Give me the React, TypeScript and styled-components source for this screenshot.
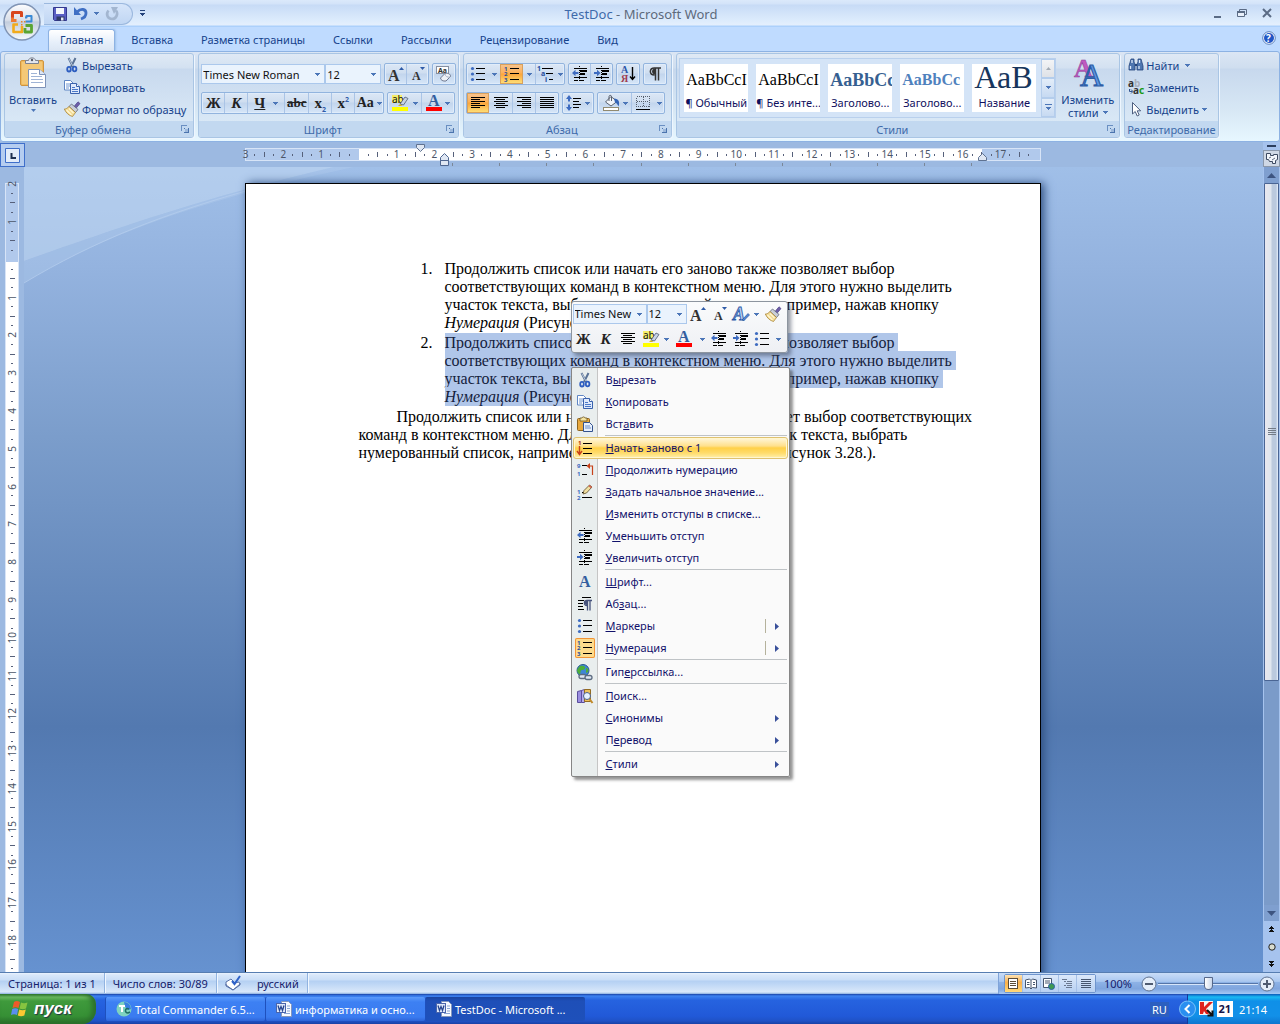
import React from "react";
import styled, { createGlobalStyle, css } from "styled-components";

const ui = `"Noto Sans", "Open Sans", sans-serif`;
const serif = `"Liberation Serif", "Times New Roman", serif`;

const Global = createGlobalStyle`
  *, *::before, *::after { box-sizing: border-box; }
  html, body { margin: 0; height: 100%; }
  body { font-family: ${ui}; font-size: 11px; color: #15428b; }
  button, select, input { font: inherit; color: inherit; margin: 0; padding: 0; border: 0; background: none; }
  svg { display: block; flex: none; overflow: visible; }
`;

/* ---------- icons ---------- */

type IcoProps = { w?: number; h?: number; crisp?: boolean; children: React.ReactNode };
const Ico = ({ w = 16, h = 16, crisp, children }: IcoProps) => (
  <svg width={w} height={h} viewBox={`0 0 ${w} ${h}`} fill="none" shapeRendering={crisp ? "crispEdges" : "auto"} aria-hidden="true">
    {children}
  </svg>
);

const Down = () => (
  <Ico w={5} h={3} crisp><path d="M0 0h5v1h-1v1h-1v1h-1v-1h-1v-1h-1z" fill="#4c76b8" /></Ico>
);

const ScissorsIcon = () => (
  <Ico>
    <path d="M4.500 1l4.600 9M11.500 1L7 10" stroke="#5a7396" strokeWidth="2" />
    <path d="M4.800 1.500l4 7.400" stroke="#dfe8f4" strokeWidth=".7" />
    <ellipse cx="5" cy="12.200" rx="1.800" ry="2.300" stroke="#2f5fc0" strokeWidth="1.800" />
    <ellipse cx="10.600" cy="12" rx="1.800" ry="2.300" stroke="#2f5fc0" strokeWidth="1.800" />
  </Ico>
);
const CopyIcon = () => (
  <Ico>
    <path d="M.5 1.500h6l2.500 2.500v7h-8.500z" fill="#fff" stroke="#5f86c4" />
    <path d="M2 5h4M2 7h4M2 9h3" stroke="#6f96d2" />
    <path d="M6.500 4.500h6l3 3v7h-9z" fill="#dfeafc" stroke="#3a62ad" />
    <path d="M12.500 4.500v3h3" fill="#fff" stroke="#3a62ad" />
    <path d="M8 8.500h3M8 10.500h6M8 12.500h6" stroke="#4a78c8" />
  </Ico>
);
const BrushIcon = () => (
  <Ico>
    <path d="M10 5.500L14 .8l2 1.800-4 4.700z" fill="#6d5ea8" stroke="#4b3f86" strokeWidth=".7" />
    <path d="M7.500 3l6.500 5.500-2.500 3-6.500-6z" fill="#c9ced8" stroke="#5d6678" strokeWidth=".8" />
    <path d="M5 5.500l6.500 6L8.500 15.500C5 14.500 2 12 .3 8c1.700.2 3.200-1 4.700-2.500z" fill="#f3dc95" stroke="#a9853a" strokeWidth=".8" />
    <path d="M2.500 9l5 5M5 7.500l4.500 4.500" stroke="#fff6d4" strokeWidth="1.200" />
  </Ico>
);
const PasteLarge = () => (
  <Ico w={28} h={32}>
    <rect x="1.500" y="3.500" width="23" height="25" rx="1.500" fill="#f0bb5d" stroke="#cf9440" />
    <path d="M3 5h20v22H3z" fill="#f4c877" />
    <path d="M6.500 6.500V3.500h3c.3-3.500 6.700-3.500 7 0h3v3z" fill="#e3e6ee" stroke="#7c8290" />
    <circle cx="13" cy="3" r="1.200" fill="#555c6b" />
    <path d="M9.500 12.500h11l6 5v13h-17z" fill="#fff" stroke="#7d92b8" />
    <path d="M20.500 12.500v5h6" fill="#dce6f5" stroke="#7d92b8" />
    <path d="M12 16.500h6M12 19.500h11M12 22.500h12M12 25.500h12" stroke="#9fb4d6" />
  </Ico>
);
const PasteSmall = () => (
  <Ico>
    <rect x=".5" y="2.500" width="12" height="12" rx="1" fill="#e9a93f" stroke="#8d6420" />
    <path d="M3 5V2h2C5.200.5 7.800.5 8 2h2v3z" fill="#f3e3a0" stroke="#6d5524" strokeWidth=".8" />
    <path d="M6.500 6.500h6l3 3v6h-9z" fill="#e8f0fc" stroke="#33528e" />
    <path d="M8 10h5M8 12h6" stroke="#6b8dcb" />
  </Ico>
);

const BulletsIcon = () => (
  <Ico>
    {[2.5, 8, 13.5].map((y) => <circle key={y} cx="2.500" cy={y} r="1.600" fill="#3d6bc0" />)}
    <path d="M6 2.500h9M6 7.500h9M6 13.500h9" stroke="#000" shapeRendering="crispEdges" />
  </Ico>
);
const NumberingIcon = () => (
  <Ico>
    <path d="M6 2.500h9M6 7.500h9M6 13.500h9" stroke="#000" shapeRendering="crispEdges" />
    <g fill="#274d9e" fontSize="6" fontWeight="700" fontFamily={ui}>
      <text x="0" y="5">1</text><text x="0" y="10">2</text><text x="0" y="16">3</text>
    </g>
  </Ico>
);
const MultilevelIcon = () => (
  <Ico w={18}>
    <path d="M5 2.500h11M9 7.500h7M12 13.500h4" stroke="#000" shapeRendering="crispEdges" />
    <g fill="#274d9e" fontSize="7" fontWeight="700" fontFamily={ui}>
      <text x="0" y="5">1</text><text x="4" y="10">a</text><text x="8" y="16">i</text>
    </g>
  </Ico>
);
const IndentIcon = ({ right }: { right?: boolean }) => (
  <Ico>
    <path d="M2 2.500h13M2 11.500h13M2 14.500h4M8 14.500h4" stroke="#000" shapeRendering="crispEdges" />
    <path d="M8 5h7M8 8h5" stroke="#000" strokeWidth="2" shapeRendering="crispEdges" />
    <path d="M7.500 0v16" stroke="#000" strokeDasharray="1 1" shapeRendering="crispEdges" />
    <path d={right ? "M6.500 7L3 3.800v2.200H0v2h3v2.200z" : "M0 7l3.500-3.200v2.200h3v2h-3v2.200z"} fill="#3d6bc0" />
  </Ico>
);
const AlignIcon = ({ kind }: { kind: "l" | "c" | "r" | "j" }) => (
  <Ico w={16} h={14} crisp>
    {[14, 9, 14, 9, 14, 9].map((w, i) => {
      const len = kind === "j" ? 14 : w;
      const x = kind === "r" ? 15 - len : kind === "c" ? 1 + Math.floor((14 - len) / 2) : 1;
      return <rect key={i} x={x} y={1 + i * 2} width={len} height="1" fill="#000" />;
    })}
  </Ico>
);
const SpacingIcon = () => (
  <Ico>
    <path d="M7 3.500h8M7 6.500h6M7 9.500h8M7 12.500h6" stroke="#000" shapeRendering="crispEdges" />
    <path d="M3 0l3 4H4v2.500H2V4H0zM3 16l3-4H4V9.500H2V12H0z" fill="#3d6bc0" />
  </Ico>
);
const SortIcon = () => (
  <Ico>
    <g fontFamily={serif} fontWeight="700" fontSize="10">
      <text x="1" y="7" fill="#2c57a8">А</text><text x="1" y="16" fill="#a03c50">Я</text>
    </g>
    <path d="M12.500 1v12M10 10.500l2.500 3 2.500-3" stroke="#000" strokeWidth="1.400" />
  </Ico>
);
const BucketIcon = () => (
  <Ico w={18}>
    <path d="M3.500 7L9 1.500l6 5-6 4.500z" fill="#f2f5fa" stroke="#59616e" />
    <path d="M7 6V1.500c0-1.500 2.500-1.500 2.500 0V6" stroke="#59616e" />
    <path d="M12 3.500c5 .5 6 3.500 4.500 8-1-2.500-2-3.500-3.500-4z" fill="#3464b6" />
    <rect x="1.500" y="12.500" width="15" height="3" fill="#fff" stroke="#918a70" />
  </Ico>
);
const BorderIcon = () => (
  <Ico>
    <path d="M1.500 1.500h13v10h-13zM8 2v10M2 6.500h12" stroke="#55606e" strokeDasharray="1 1" shapeRendering="crispEdges" />
    <path d="M1 14.500h14" stroke="#000" shapeRendering="crispEdges" />
  </Ico>
);
const HighlightIcon = () => (
  <Ico w={18}>
    <rect x="0" y="0" width="10" height="8" fill="#f5ee6a" />
    <text x="0" y="8" fontSize="10" fill="#111" fontFamily={ui}>ab</text>
    <path d="M8 9l5-7 3 1.500-4.500 6.500z" fill="#c7d3e6" stroke="#4c5a70" strokeWidth=".8" />
    <path d="M8 9l-2 2h4.500z" fill="#d3b02a" />
    <rect x="0" y="12" width="16" height="4" fill="#ffff00" />
  </Ico>
);
const FontColorIcon = () => (
  <Ico>
    <text x="2" y="11" fontSize="16" fontWeight="700" fill="#335f9f" fontFamily={serif}>A</text>
    <rect x="0" y="12" width="16" height="4" fill="#f00" />
  </Ico>
);
const SizeAIcon = ({ up }: { up?: boolean }) => (
  <Ico w={18}>
    <text x={up ? 1 : 3} y={up ? 15 : 14} fontSize={up ? 16 : 12} fontWeight="700" fill="#333" fontFamily={serif}>A</text>
    <path d={up ? "M12 4h5l-2.500-3z" : "M11 1h5l-2.500 3z"} fill="#2f5ba8" />
  </Ico>
);
const ClearIcon = () => (
  <Ico w={18}>
    <rect x="1.500" y=".5" width="12" height="7" fill="#fff" stroke="#8590a3" />
    <text x="3" y="7" fontSize="7" fontWeight="700" fill="#333" fontFamily={ui}>Аа</text>
    <path d="M5.500 12l4.500-4.500c2-1 6 .5 5.500 3l-4.500 4.500c-3 .5-5.500-1-5.500-3z" fill="#eef1f6" stroke="#6d7890" />
    <path d="M10 8c.5 2.500 2 3.500 5 3" stroke="#a9b3c6" />
  </Ico>
);
const StyleAIcon = () => (
  <Ico w={18}>
    <text x="0" y="14" fontSize="18" fontStyle="italic" fontWeight="700" fill="#b9d2f4" stroke="#2f5ba8" strokeWidth=".9" fontFamily={serif}>A</text>
    <path d="M9 14l6-6.500 1.500 1.500-5.500 5.500z" fill="#4f86d8" stroke="#254c8d" strokeWidth=".6" />
  </Ico>
);
const ChangeStylesIcon = () => (
  <Ico w={32} h={32}>
    <text x="2" y="20" fontSize="26" fontWeight="700" fill="#c05ac0" stroke="#8a3c96" strokeWidth=".5" fontFamily={serif}>A</text>
    <text x="8" y="29" fontSize="32" fill="#5f97e2" stroke="#2e5da6" strokeWidth="1.200" fontFamily={serif}>A</text>
  </Ico>
);
const FindIcon = () => (
  <Ico>
    <path d="M3 2h3v3l1 2v6H1V9zM13 2h-3v3L9 7v6h6V9z" fill="#4e76b0" stroke="#24457c" strokeWidth=".8" />
    <path d="M2.500 9v3M11 9v3M4 3v3M11.500 3v3" stroke="#dce9fb" strokeWidth="1.300" />
    <path d="M7 7h2v2H7z" fill="#24457c" />
  </Ico>
);
const ReplaceIcon = () => (
  <Ico w={17}>
    <g fontSize="10" fontWeight="700" fontFamily={ui}>
      <text x="0" y="8" fill="#333">a</text><text x="6" y="8" fill="#a9b1bd">b</text>
      <text x="5" y="15" fill="#333">a</text><text x="11" y="15" fill="#1b9a1b">c</text>
    </g>
    <path d="M1.500 10v2.500h3M3 10.500l2 2-2 2" stroke="#33558f" />
  </Ico>
);
const CursorIcon = () => (
  <Ico><path d="M4.500 1.500v11.500l2.700-2.500 2 4.500 2-1-2-4.200h3.500z" fill="#fff" stroke="#4e5f80" /></Ico>
);
const RestartIcon = () => (
  <Ico>
    <path d="M6 3.500h9M6 8.500h9M6 13.500h9" stroke="#000" shapeRendering="crispEdges" />
    <text x="1" y="5" fontSize="6" fontWeight="700" fill="#b03010" fontFamily={ui}>1</text>
    <path d="M2.500 6v7M0 11l2.500 3.500L5 11" stroke="#c8421a" strokeWidth="1.400" />
  </Ico>
);
const ContinueIcon = () => (
  <Ico>
    <g fontSize="6" fontWeight="700" fill="#3d6bc0" fontFamily={ui}><text x="0" y="6">9</text><text x="0" y="14">1</text></g>
    <path d="M5 3.500h5M5 12.500h5" stroke="#000" shapeRendering="crispEdges" />
    <path d="M15.500 13V4h-4" stroke="#c8421a" strokeWidth="1.200" /><path d="M9.500 4L13 1v6z" fill="#c8421a" />
  </Ico>
);
const SetValueIcon = () => (
  <Ico>
    <g fontSize="6" fontWeight="700" fill="#3d6bc0" fontFamily={ui}><text x="0" y="10">1</text><text x="0" y="16">2</text></g>
    <path d="M5 8.500h2M5 13.500h10" stroke="#000" shapeRendering="crispEdges" />
    <path d="M6 10l1-3.500L12.500 1l2.500 2-5.500 6z" fill="#f0dfa0" stroke="#5b4a25" strokeWidth=".8" />
    <path d="M12.500 1l2.500 2-1 1.200-2.500-2z" fill="#d7604e" />
  </Ico>
);
const FontAIcon = () => (
  <Ico><text x="2" y="13" fontSize="16" fontWeight="700" fill="#335f9f" fontFamily={serif}>A</text></Ico>
);
const ParagraphIcon = () => (
  <Ico>
    <path d="M5 1.500h9M1 4.500h6M1 7.500h5M1 10.500h5M1 13.500h6" stroke="#000" shapeRendering="crispEdges" />
    <path d="M10 9.500c-3.500 0-3.500-5 0-5h5M10.500 5v9.500M13 5v9.500" stroke="#46527c" strokeWidth="1.300" />
    <path d="M10 5H9C7 5 7 9 10 9z" fill="#46527c" />
  </Ico>
);
const LinkIcon = () => (
  <Ico w={17}>
    <circle cx="7" cy="6.500" r="6" fill="#3f86d6" stroke="#27588f" />
    <path d="M3 3c2-2 5-1 6 0s-1 3-3 3-1 3-2 4-3-2-3-4zM10 4c2 0 3 2 2 4l-2 1z" fill="#4caf3a" />
    <rect x="3" y="10.500" width="7" height="4" rx="2" stroke="#5d6c80" strokeWidth="1.300" fill="#dfe7f2" />
    <rect x="9" y="11.500" width="7" height="4" rx="2" stroke="#5d6c80" strokeWidth="1.300" fill="#dfe7f2" />
  </Ico>
);
const ResearchIcon = () => (
  <Ico>
    <path d="M.5 3.500l4-1v12h-4z" fill="#9a8ee0" stroke="#5a4e9e" />
    <path d="M4.500 2.500l3-1v13h-3z" fill="#b4aaec" stroke="#5a4e9e" />
    <path d="M7.500 1.500h6v12h-6z" fill="#eec25c" stroke="#946c22" />
    <circle cx="10" cy="8" r="3.500" fill="#e6f2ff" stroke="#4b6087" />
    <path d="M12.500 11l3 4" stroke="#c18a2a" strokeWidth="2" />
  </Ico>
);
const SaveIcon = () => (
  <Ico>
    <path d="M1.500 1.500h13v13h-12l-1-1z" fill="#5a5fc4" stroke="#34398f" />
    <path d="M4 2h8v6H4z" fill="#f4f7fc" /><path d="M4.500 10.500h8v4h-8z" fill="#2f3a66" /><path d="M9 11.500h2.500v3H9z" fill="#e6ebf5" />
  </Ico>
);
const UndoIcon = ({ redo }: { redo?: boolean }) =>
  redo ? (
    <Ico><path d="M12 4.500c2.500 3 .5 8.500-4 8.500S1.500 8 4.500 4.500" stroke="#a3b6d0" strokeWidth="2.600" /><path d="M7 1h7l-4 7z" fill="#a3b6d0" /></Ico>
  ) : (
    <Ico><path d="M4 6c4-4 9-3 9 1 0 3-2 5-5 6" stroke="#3f6fc4" strokeWidth="2.800" /><path d="M1 1v8h7z" fill="#3f6fc4" /></Ico>
  );
const OfficeLogo = () => (
  <Ico w={38} h={38}>
    <defs>
      <linearGradient id="orb" x1="0" y1="0" x2="0" y2="1">
        <stop offset="0" stopColor="#fdfdfe" /><stop offset=".45" stopColor="#d9dfe9" />
        <stop offset=".5" stopColor="#c3cddd" /><stop offset="1" stopColor="#f7fafd" />
      </linearGradient>
    </defs>
    <circle cx="19" cy="19" r="18" fill="url(#orb)" stroke="#8094b4" strokeWidth="1.500" />
    <path d="M13 17.500H9.500v-8h9V14" stroke="#d8461c" strokeWidth="3" strokeLinejoin="round" />
    <path d="M9.500 14.500v3h4" stroke="#ee7a34" strokeWidth="3" />
    <path d="M22 14.500h1.500v-1.500h5v5.500h-6" stroke="#3a8ad6" strokeWidth="2" strokeLinejoin="round" />
    <path d="M15 21.500h-4.500v7.500H19v-6" stroke="#f2ab1c" strokeWidth="2.600" strokeLinejoin="round" />
    <path d="M22.500 22.500h6v6.500h-6.500v-4" stroke="#5aa532" strokeWidth="2.800" strokeLinejoin="round" />
    <path d="M18 18h1.500v1.500H18zM18 21h1.500v1.500H18zM21 18h1.500v1.500H21z" fill="#e8852a" />
  </Ico>
);
const Pilcrow = () => <Ico><path d="M7.500 9C2 9 2 2 7.500 2H14M8.500 2v12.500M11.500 2v12.500" stroke="#333" strokeWidth="1.500" /><path d="M8 2.500C4 2.500 4 8.500 8 8.500z" fill="#333" /></Ico>;
const Launcher = () => (
  <Ico w={8} h={8} crisp><path d="M.5 5.500v-5h5" stroke="#6a8fc2" /><path d="M3 3l2 2M7.500 3v4.500H3" stroke="#4b74ae" /><path d="M4 4h3v3H4z" fill="#9cb8dc" /></Ico>
);
const WordDoc = () => (
  <Ico>
    <path d="M5.500.5h7l3 3v12h-10z" fill="#f7faff" stroke="#8396bd" />
    <path d="M11 5h3M11 7.500h3M11 10h3M8 12.500h6" stroke="#8aa5d4" />
    <rect x=".500" y="2.500" width="9" height="9" fill="#dfe8f9" stroke="#4a65ac" />
    <path d="M2 4.500l1.500 5L5 5.500l1.500 4 1.500-5" stroke="#26458f" strokeWidth="1.300" />
  </Ico>
);
const Flag = () => (
  <Ico w={20} h={18}>
    <path d="M4 2c2-1.500 4-1 6 0L8.500 8c-2-1-4-1-6 0z" fill="#ee5a2a" /><path d="M11 2.500c2 1 4 1 6.500 0L16 8.500c-2 1-4.500 1-6.500 0z" fill="#86c440" />
    <path d="M2.200 9c2-1 4-1 6 0L7 15c-2-1-4-1-6 0z" fill="#5a8ef0" /><path d="M9.300 9.500c2 1 4.500 1 6.500 0l-1.500 6c-2 1-4.500 1-6.500 0z" fill="#fbc832" />
  </Ico>
);

/* ---------- frame ---------- */

const Screen = styled.div`display: flex; flex-direction: column; height: 100vh; overflow: hidden; background: #bfdbff;`;
const AppHead = styled.header`position: relative; flex: none; background: #bfdbff;`;
const TitleBar = styled.div`
  display: grid; grid-template-columns: 1fr auto 1fr; align-items: center; height: 27px; padding-left: 44px;
  background: linear-gradient(#dbe9fb 0, #d3e3f9 4px, #c7dbf6 5px, #dcebfc 20px, #e4effd 25px, #acd0fb 26px, #acd0fb 27px);
`;
const Orb = styled.button`position: absolute; left: 3px; top: 3px; z-index: 2; border-radius: 50%;`;
const QuickBar = styled.div`
  display: flex; align-items: center; gap: 3px; justify-self: start; height: 22px;
`;
const QuickPill = styled.div`
  display: flex; align-items: center; gap: 5px; height: 22px; padding: 0 12px 0 8px;
  border: 1px solid #9bb8de; border-left: 0; border-radius: 0 12px 12px 0;
  background: linear-gradient(#d6e5fa, #c0d6f3);
`;
const PlainButton = styled.button`display: flex; align-items: center; justify-content: center; min-width: 12px; min-height: 12px;`;
const Title = styled.h1`margin: 0 42px 0 0; font-size: 13px; line-height: 18px; font-weight: 400; color: #3e6aaa; span { color: #5d6a7c; }`;
const WinButtons = styled.div`display: flex; gap: 13px; justify-self: end; padding-right: 7px;`;
const TabRow = styled.nav`display: flex; gap: 4px; height: 24px; padding: 2px 4px 0 48px; align-items: stretch;`;
const Tab = styled.button<{ $on?: boolean }>`
  padding: 0 11px 2px; border: 1px solid transparent; border-bottom: 0; border-radius: 3px 3px 0 0;
  ${(p) => p.$on && css`
    border-color: #8db2e3; background: linear-gradient(#fff, #e6effa 60%, #dbe6f4); box-shadow: 1px 0 2px #9fc2ea;
  `}
`;
const HelpButton = styled.button`margin-left: auto; padding-bottom: 4px; display: flex; align-items: center;`;

const Ribbon = styled.div`
  display: flex; gap: 4px; padding: 1px 3px 3px; height: 91px;
  border: 1px solid #8db2e3; border-radius: 3px;
  background: linear-gradient(#dbe6f4 0, #cfdeef 16px, #c7d8ed 17px, #d8e8f5 60px, #e7f7ff);
  box-shadow: 0 1px 0 #8ba6c9;
`;
const GroupBox = styled.section`
  display: flex; flex-direction: column; flex: none; border: 1px solid #a9c5e4; border-radius: 3px; overflow: hidden;
  background: linear-gradient(#dfe9f5 0, #d3e1f1 14px, #c8d9ee 15px, #d9e8f6 68px);
  box-shadow: 1px 1px 0 #eef6ff;
`;
const GroupBody = styled.div<{ $pad?: string }>`display: flex; flex: 1; min-height: 0; padding: ${(p) => p.$pad || "0"};`;
const GroupLabel = styled.div`
  display: flex; align-items: center; height: 16px; padding: 0 2px; background: #c2d8f0; color: #3e6aaa;
  span { flex: 1; text-align: center; }
`;
const Group = ({ name, launcher = true, pad, children }: { name: string; launcher?: boolean; pad?: string; children: React.ReactNode }) => (
  <GroupBox aria-label={name}>
    <GroupBody $pad={pad}>{children}</GroupBody>
    <GroupLabel><span>{name}</span>{launcher && <PlainButton aria-label={`${name}: параметры`}><Launcher /></PlainButton>}</GroupLabel>
  </GroupBox>
);
const BigButton = styled.button<{ $w: number }>`
  display: flex; flex-direction: column; align-items: center; width: ${(p) => p.$w}px; padding-top: 3px; line-height: 13px;
  svg + span { margin-top: 4px; }
`;
const Inline = styled.span`display: flex; align-items: center; gap: 4px;`;
const Stack = styled.div`display: flex; flex-direction: column;`;
const SmallButton = styled.button<{ $gap?: number }>`
  display: flex; align-items: center; height: 22px; padding: 0 3px; white-space: nowrap;
  > svg:first-child { margin-right: 2px; }
  > svg:last-child { margin-left: ${(p) => p.$gap || 0}px; }
`;
const ToolRows = styled.div`display: flex; flex-direction: column; gap: 7px;`;
const ToolRow = styled.div`display: flex; height: 22px; gap: 3px;`;
const ComboPair = styled.div`display: flex; align-items: center;`;
const ToolSet = styled.div`
  display: flex; border: 1px solid #92b4de; border-radius: 2px; box-shadow: inset 0 0 0 1px #e0ecfa;
  background: linear-gradient(#dce7f5 0, #cfdef0 9px, #c2d5ed 10px, #d6e6f8);
`;
const Tool = styled.button<{ $w?: number; $gap?: number; $on?: boolean; $line?: boolean }>`
  display: flex; align-items: center; justify-content: center; gap: ${(p) => p.$gap || 3}px; width: ${(p) => p.$w || 22}px; height: 20px;
  border-left: ${(p) => (p.$line ? "1px solid #aac4e6" : "0")}; color: #222;
  ${(p) => p.$on && css`background: linear-gradient(#f7c592, #fdb158 45%, #fba53a 50%, #fee37c); box-shadow: inset 0 0 0 1px #d9a15c;`}
`;
const Glyph = styled.span<{ $i?: boolean; $u?: boolean; $s?: boolean; $size?: number }>`
  font-family: ${serif}; font-weight: 700; font-size: ${(p) => p.$size || 15}px; line-height: 18px;
  font-style: ${(p) => (p.$i ? "italic" : "normal")};
  text-decoration: ${(p) => (p.$u ? "underline" : p.$s ? "line-through" : "none")};
  sub, sup { font-family: ${ui}; font-size: 7px; line-height: 1px; color: #2f5ba8; }
`;
const ComboBox = styled.label<{ $w: number }>`
  display: flex; align-items: center; width: ${(p) => p.$w}px; height: 20px; padding-right: 4px;
  border: 1px solid #abc8ec; background: #eaf3fd; color: #000;
  select { appearance: none; flex: 1; min-width: 0; height: 18px; padding-left: 1px; color: #111; }
`;
const Combo = ({ w, label, value }: { w: number; label: string; value: string }) => (
  <ComboBox $w={w}><select aria-label={label} defaultValue={value}><option>{value}</option></select><Down /></ComboBox>
);

const Gallery = styled.div`display: flex; border: 1px solid #b9d0ed; background: #d4e4f7; margin: 4px 0 4px 2px; height: 60px;`;
const Cards = styled.div`display: flex; gap: 8px; padding: 5px 5px 5px 4px;`;
const Card = styled.button<{ $c: string; $size: number; $b?: boolean }>`
  display: flex; flex-direction: column; width: 64px; height: 48px; overflow: hidden; background: #fff; color: #10105e;
  strong {
    height: 30px; width: 64px; overflow: hidden; padding-left: 2px; text-align: left; white-space: nowrap;
    font-family: ${serif}; font-size: ${(p) => p.$size}px; line-height: ${(p) => (p.$size > 20 ? 26 : 32)}px;
    font-weight: ${(p) => (p.$b ? 700 : 400)}; color: ${(p) => p.$c};
  }
  span { width: 64px; text-align: center; white-space: nowrap; line-height: 18px; }
`;
const GalleryNav = styled.div`
  display: flex; flex-direction: column; width: 14px;
  button { flex: 1; display: flex; align-items: center; justify-content: center; border: 1px solid #b4cdec; background: linear-gradient(#e3edf9, #c7daf2); }
  button:first-child { background: linear-gradient(#f3f4f6, #dfe2e7); }
`;

/* ---------- workspace ---------- */

const Work = styled.div`
  flex: 1; min-height: 0; display: grid; grid-template: 25px minmax(0, 1fr) / 24px minmax(0, 1fr) 17px; background: #9cb9e1;
`;
const TabStop = styled.button`
  width: 25px; height: 24px; margin-top: 1px; border: 1px solid #3f6fca; background: #b5cdf0; display: flex; align-items: center; justify-content: center;
`;
const RulerRow = styled.div`display: flex; justify-content: center; padding: 6px 2px 0 0;`;
const RulerWrap = styled.div`position: relative; width: 796px;`;
const HRuler = styled.div`
  display: flex; justify-content: space-between; height: 13px; border: 1px solid #d7e4f7; color: #4c5668;
  background: linear-gradient(90deg, #b1c9ec 113px, #fff 113px, #fff 736px, #b1c9ec 736px);
`;
const Mark = styled.span`
  width: 0; display: flex; align-items: center; justify-content: center; font-size: 10px; line-height: 11px;
`;
const Dot = styled.i<{ $long?: boolean; $v?: boolean }>`
  flex: none; background: #56607a;
  width: ${(p) => (p.$v ? (p.$long ? 5 : 2) : 1)}px; height: ${(p) => (p.$v ? 1 : p.$long ? 5 : 2)}px;
`;
const Stops = styled.div`
  display: flex; justify-content: space-between; padding: 2px 68px 0 207px;
  i { width: 1px; height: 3px; background: #7b8797; }
`;
const Marker = styled.span<{ $x: number; $y: number }>`position: absolute; left: ${(p) => p.$x}px; top: ${(p) => p.$y}px;`;
const VSide = styled.div`overflow: hidden; padding: 16px 5px 0;`;
const VRuler = styled.div`
  display: flex; flex-direction: column; justify-content: space-between; width: 14px; height: 1137px; border: 1px solid #d7e4f7;
  background: linear-gradient(#b1c9ec 78px, #fff 78px); color: #4c5668;
`;
const VMark = styled.span`
  height: 0; width: 12px; display: flex; align-items: center; justify-content: center; font-size: 10px;
  b { font-weight: 400; writing-mode: vertical-rl; transform: rotate(180deg); line-height: 12px; }
`;
const Canvas = styled.main`
  position: relative; display: flex; justify-content: center; padding: 16px 2px 0 0; overflow: hidden;
  background: linear-gradient(#a0bfe8 0, #94b3df 100px, #7b9dcb 270px, #5379b0 560px, #6692d0 100%);
`;
const Swoosh = styled.div`position: absolute; left: 0; top: 0;`;
const Paper = styled.article`
  position: relative; flex: none; width: 796px; height: 1123px; padding: 76px 58px 0 113px;
  border: 1px solid #000; background: #fff; box-shadow: 3px 0 9px #2f4f80;
  font-family: ${serif}; font-size: 16px; line-height: 18px; color: #000;
  p { margin: 0; text-indent: 38px; }
`;
const DocList = styled.ol`
  margin: 0; padding-left: 86px; li { margin-bottom: 2px; list-style: none; }
`;
const Num = styled.span`float: left; width: 24px; margin-left: -24px;`;
const Picked = styled.mark`background: #b0c6e9; color: #14213c; padding: 1px 4px 1px 0; box-decoration-break: clone; -webkit-box-decoration-break: clone;`;

const VScroll = styled.div`grid-column: 3; grid-row: 1 / 3; display: flex; flex-direction: column; align-items: center; background: #a6c3ee;`;
const SplitBar = styled.div`width: 9px; height: 2px; margin: 3px 0; background: #2c3f5f;`;
const RulerToggle = styled.button`width: 17px; height: 17px; display: flex; align-items: center; justify-content: center; border: 1px solid #8b98ab; background: #cfd8e5;`;
const ArrowButton = styled.button`display: flex; align-items: center; justify-content: center; width: 15px; height: 16px; background: #7f9fcf;`;
const Track = styled.div`flex: 1; width: 15px; background: #7b9bc9;`;
const Thumb = styled.div`
  height: 69%; display: flex; align-items: center; justify-content: center; border: 1px solid #4a6594; border-radius: 1px;
  background: linear-gradient(90deg, #e9e7ee, #dfe6ef 45%, #bccadd 55%, #b9c9df 85%, #e8f0fa);
`;
const NavButton = styled.button`width: 15px; height: 17px; display: flex; align-items: center; justify-content: center;`;

/* ---------- floating menus ---------- */

const MiniBar = styled.div`
  position: absolute; left: 325px; top: 117px; width: 217px; height: 52px; padding: 1px;
  display: flex; flex-direction: column; gap: 3px; font-family: ${ui}; font-size: 11px;
  border: 1px solid #8d959f; border-radius: 3px; background: linear-gradient(#fafbfc, #eef0f4); box-shadow: 3px 3px 4px rgba(60, 70, 90, .55);
`;
const MiniRow = styled.div`display: flex; align-items: center; height: 22px;`;
const Menu = styled.div`
  position: absolute; left: 325px; top: 183px; width: 219px; padding: 1px; font-family: ${ui}; font-size: 11px; line-height: 16px;
  border: 1px solid #868686; border-radius: 2px; box-shadow: 3px 3px 3px rgba(60, 60, 60, .55);
  background: linear-gradient(90deg, #e9eeee 25px, #c5c5c5 25px, #c5c5c5 26px, #fafafa 26px);
`;
const MenuRow = styled.button<{ $hot?: boolean }>`
  display: flex; align-items: center; width: 100%; height: 22px; text-align: left; white-space: nowrap; color: #11116b;
  border: 1px solid transparent; border-radius: 3px;
  ${(p) => p.$hot && css`
    border-color: #dfc270; box-shadow: inset 0 0 0 1px #fff6d0;
    background: linear-gradient(#fff7db, #ffe08c 40%, #ffd048 50%, #ffdc6c 75%, #fff0ae);
  `}
`;
const Slot = styled.span<{ $on?: boolean }>`
  flex: none; display: flex; align-items: center; justify-content: center; width: 20px; height: 20px; margin-left: 1px; border-radius: 2px;
  ${(p) => p.$on && css`background: #fddb8b; box-shadow: inset 0 0 0 1px #f29436;`}
`;
const MenuText = styled.span`flex: 1; padding-left: 11px;`;
const Divider = styled.hr`margin: 0 1px 0 32px; height: 2px; border: 0; border-top: 1px solid #bfc3c6;`;
const SubMark = styled.span<{ $split?: boolean }>`
  display: flex; align-items: center; height: 14px; padding: 0 8px 0 9px; border-left: 1px solid ${(p) => (p.$split ? "#b5b29c" : "transparent")};
`;
const Right = () => <Ico w={4} h={7}><path d="M0 0l4 3.500L0 7z" fill="#39509a" /></Ico>;

/* ---------- bottom bars ---------- */

const StatusBar = styled.footer`
  flex: none; display: flex; align-items: flex-start; height: 22px; border-top: 1px solid #567db1; color: #15216b;
  background: linear-gradient(#eaf3fe 0, #d8e7fa 2px, #cadef7 7px, #b4d0f3 8px, #d9e8fa 19px, #8aaede 21px);
`;
const StatusItem = styled.div`
  display: flex; align-items: center; gap: 15px; height: 20px; padding: 0 8px; border-right: 1px solid #91b3e0; box-shadow: 1px 0 0 #f0f7ff;
`;
const ZoomArea = styled.div`
  display: flex; align-items: center; margin-left: auto; height: 21px; padding: 0 5px; gap: 1px; border-left: 1px solid #7fa3d8;
  background: linear-gradient(#c9ddf8, #a9c7f0 40%, #8db2e6 45%, #7fa5de 75%, #a6c8f5);
`;
const Views = styled.div`display: flex; border: 1px solid #6f95cd; border-radius: 2px; margin-right: 7px;`;
const View = styled.button<{ $on?: boolean }>`
  width: 18px; height: 17px; display: flex; align-items: center; justify-content: center; border-right: 1px solid #a5c0e6;
  background: ${(p) => (p.$on ? "linear-gradient(#fde3b5, #fbb04a 45%, #ffd97a)" : "linear-gradient(#dbe8fa, #b7d0f2)")};
  &:last-child { border-right: 0; }
`;
const Percent = styled.span`margin-right: 8px;`;
const Slider = styled.input`
  appearance: none; width: 100px; height: 16px; background: linear-gradient(transparent 7px, #5575a8 7px, #5575a8 8px, #d7e6fb 8px, #d7e6fb 9px, transparent 9px);
  &::-webkit-slider-thumb {
    appearance: none; width: 9px; height: 13px; background: linear-gradient(90deg, #fff, #c9d6ea); border: 1px solid #56688a; border-radius: 1px 1px 5px 5px;
  }
`;
const Round = styled.button`display: flex; border-radius: 50%;`;

const TaskBar = styled.div`
  flex: none; display: flex; align-items: stretch; height: 30px; color: #fff;
  background: linear-gradient(#1941a5 0, #3c81f0 2px, #2663e0 6px, #2159d8 22px, #1f52c6 27px, #1941a5);
`;
const Start = styled.button`
  display: flex; align-items: center; gap: 4px; width: 96px; padding-left: 10px; margin-right: 9px; border-radius: 0 10px 14px 0;
  font-family: "Liberation Sans", Arial, sans-serif; font-size: 17px; font-weight: 700; font-style: italic; color: #fff; text-shadow: 1px 1px 1px #234;
  background: linear-gradient(#2f7a2f 0, #6ebc62 3px, #3f9a3c 7px, #369035 22px, #2a702b 29px); box-shadow: inset -4px 0 5px #2c702c;
`;
const Task = styled.button<{ $on?: boolean }>`
  display: flex; align-items: center; gap: 3px; flex: 0 1 160px; margin: 3px 0 3px; padding-left: 10px; border-radius: 2px; border-left: 1px solid #1e50bd; white-space: nowrap;
  background: ${(p) => (p.$on ? "linear-gradient(#1a44a0, #1e4fb8 4px, #1e50ba)" : "linear-gradient(#5b9bfb, #3d80f3 5px, #3a7bf0 20px, #2d65d8)")};
`;
const Lang = styled.span`margin-left: auto; align-self: center; padding: 0 2px; background: #2c5fc0; margin-right: 18px;`;
const Tray = styled.div`
  display: flex; align-items: center; gap: 3px; padding-right: 13px; border-left: 1px solid #16399b;
  background: linear-gradient(#0c59b9 0, #19b9f3 3px, #0f90e8 7px, #1290e8 22px, #0d76cf);
  time { padding-left: 3px; }
`;
const Chevron = styled.button`margin-left: -9px; display: flex;`;
const DayBox = styled.span`width: 16px; height: 16px; background: #fff; color: #16164a; font-weight: 700; line-height: 16px; text-align: center;`;

/* ---------- content ---------- */

const tabs = ["Главная", "Вставка", "Разметка страницы", "Ссылки", "Рассылки", "Рецензирование", "Вид"];
const styleCards = [
  { sample: "AaBbCcI", name: "¶ Обычный", c: "#000", size: 16 },
  { sample: "AaBbCcI", name: "¶ Без инте...", c: "#000", size: 16 },
  { sample: "AaBbCc", name: "Заголово...", c: "#365f91", size: 18, b: true },
  { sample: "AaBbCc", name: "Заголово...", c: "#4f81bd", size: 16, b: true },
  { sample: "АаВ", name: "Название", c: "#17365d", size: 32 },
];

type Item = { t: string; icon?: React.ReactNode; hot?: boolean; on?: boolean; sub?: boolean; split?: boolean };
const menu: (Item | null)[] = [
  { t: "В&ырезать", icon: <ScissorsIcon /> },
  { t: "&Копировать", icon: <CopyIcon /> },
  { t: "Вст&авить", icon: <PasteSmall /> },
  null,
  { t: "&Начать заново с 1", icon: <RestartIcon />, hot: true },
  { t: "&Продолжить нумерацию", icon: <ContinueIcon /> },
  { t: "&Задать начальное значение...", icon: <SetValueIcon /> },
  { t: "&Изменить отступы в списке..." },
  { t: "У&меньшить отступ", icon: <IndentIcon /> },
  { t: "&Увеличить отступ", icon: <IndentIcon right /> },
  null,
  { t: "&Шрифт...", icon: <FontAIcon /> },
  { t: "Аб&зац...", icon: <ParagraphIcon /> },
  { t: "&Маркеры", icon: <BulletsIcon />, sub: true, split: true },
  { t: "&Нумерация", icon: <NumberingIcon />, on: true, sub: true, split: true },
  null,
  { t: "Гип&ерссылка...", icon: <LinkIcon /> },
  null,
  { t: "&Поиск...", icon: <ResearchIcon /> },
  { t: "&Синонимы", sub: true },
  { t: "П&еревод", sub: true },
  null,
  { t: "&Стили", sub: true },
];

const Mnemonic = ({ text }: { text: string }) => {
  const i = text.indexOf("&");
  return <MenuText>{text.slice(0, i)}<u>{text[i + 1]}</u>{text.slice(i + 2)}</MenuText>;
};

const body = "Продолжить список или начать его заново также позволяет выбор соответствующих команд в контекстном меню. Для этого нужно выделить участок текста, выбрать нумерованный список, например, нажав кнопку ";
const Sentence = () => <>{body}<em>Нумерация</em> (Рисунок 3.28.).</>;

const hMarks = Array.from({ length: 85 }, (_, k) => k);
const vMarks = Array.from({ length: 121 }, (_, k) => k);

export default function App() {
  return (
    <Screen>
      <Global />
      <AppHead>
        <Orb aria-label="Office"><OfficeLogo /></Orb>
        <TitleBar>
          <QuickBar>
            <QuickPill>
              <PlainButton aria-label="Сохранить"><SaveIcon /></PlainButton>
              <PlainButton aria-label="Отменить"><UndoIcon /></PlainButton>
              <Down />
              <PlainButton aria-label="Вернуть"><UndoIcon redo /></PlainButton>
            </QuickPill>
            <PlainButton aria-label="Настройка панели"><Ico w={7} h={7} crisp><path d="M1 0h5v1H1zM1 3h5v1H5v1H4v1H3V5H2V4H1z" fill="#24427a" /></Ico></PlainButton>
          </QuickBar>
          <Title>TestDoc <span>- Microsoft Word</span></Title>
          <WinButtons>
            <PlainButton aria-label="Свернуть"><Ico w={12} h={12} crisp><path d="M3 8h7v2H3z" fill="#5a6b85" /></Ico></PlainButton>
            <PlainButton aria-label="Восстановить"><Ico w={12} h={12}><path d="M3.500 3V1.500h7v5H9" stroke="#5a6b85" /><path d="M1.500 3.500h7v5h-7z" stroke="#5a6b85" fill="#e8f0fb" /><path d="M1 3h8v2H1z" fill="#5a6b85" /></Ico></PlainButton>
            <PlainButton aria-label="Закрыть"><Ico w={12} h={12}><path d="M2 1l8 8M10 1l-8 8" stroke="#5a6b85" strokeWidth="2" /></Ico></PlainButton>
          </WinButtons>
        </TitleBar>
        <TabRow>
          {tabs.map((t, i) => <Tab key={t} $on={i === 0}>{t}</Tab>)}
          <HelpButton aria-label="Справка">
            <Ico w={14} h={14}><circle cx="7" cy="7" r="6.300" fill="#fff" stroke="#5a80bb" /><circle cx="7" cy="7" r="5" fill="#2356c5" /><text x="4" y="11" fontSize="10" fontWeight="700" fill="#fff" fontFamily={ui}>?</text></Ico>
          </HelpButton>
        </TabRow>
      </AppHead>

      <Ribbon>
        <Group name="Буфер обмена" pad="0 4px 0 0">
          <BigButton $w={56}><PasteLarge /><span>Вставить</span><Ico w={5} h={8}><path d="M0 3h5L2.500 6z" fill="#4c76b8" /></Ico></BigButton>
          <Stack>
            <SmallButton><ScissorsIcon />Вырезать</SmallButton>
            <SmallButton><CopyIcon />Копировать</SmallButton>
            <SmallButton><BrushIcon />Формат по образцу</SmallButton>
          </Stack>
        </Group>

        <Group name="Шрифт" pad="9px 2px 0">
          <ToolRows>
            <ToolRow>
              <ComboPair>
                <Combo w={124} label="Шрифт" value="Times New Roman" />
                <Combo w={56} label="Размер" value="12" />
              </ComboPair>
              <ToolSet><Tool $w={21} aria-label="Увеличить размер"><SizeAIcon up /></Tool><Tool $line aria-label="Уменьшить размер"><SizeAIcon /></Tool></ToolSet>
              <ToolSet><Tool aria-label="Очистить формат"><ClearIcon /></Tool></ToolSet>
            </ToolRow>
            <ToolRow>
              <ToolSet>
                <Tool><Glyph>Ж</Glyph></Tool>
                <Tool $line $w={23}><Glyph $i>К</Glyph></Tool>
                <Tool $line $w={37} $gap={8}><Glyph $u>Ч</Glyph><Down /></Tool>
                <Tool $line $w={24}><Glyph $s $size={13}>abc</Glyph></Tool>
                <Tool $line $w={23}><Glyph>x<sub>2</sub></Glyph></Tool>
                <Tool $line $w={23}><Glyph>x<sup>2</sup></Glyph></Tool>
                <Tool $line $w={29}><Glyph $size={14}>Aa</Glyph><Down /></Tool>
              </ToolSet>
              <ToolSet>
                <Tool $w={33} aria-label="Цвет выделения"><HighlightIcon /><Down /></Tool>
                <Tool $line $w={33} aria-label="Цвет текста"><FontColorIcon /><Down /></Tool>
              </ToolSet>
            </ToolRow>
          </ToolRows>
        </Group>

        <Group name="Абзац" pad="9px 4px 0 2px">
          <ToolRows>
            <ToolRow>
              <ToolSet>
                <Tool $w={33} $gap={6} aria-label="Маркеры"><BulletsIcon /><Down /></Tool>
                <Tool $on $w={23} aria-label="Нумерация"><NumberingIcon /></Tool>
                <Tool $w={12} aria-label="Библиотека нумерации"><Down /></Tool>
                <Tool $line $w={29} aria-label="Многоуровневый список"><MultilevelIcon /><Down /></Tool>
              </ToolSet>
              <ToolSet><Tool $w={21} aria-label="Уменьшить отступ"><IndentIcon /></Tool><Tool $line aria-label="Увеличить отступ"><IndentIcon right /></Tool></ToolSet>
              <ToolSet><Tool aria-label="Сортировка"><SortIcon /></Tool></ToolSet>
              <ToolSet><Tool aria-label="Отобразить все знаки"><Pilcrow /></Tool></ToolSet>
            </ToolRow>
            <ToolRow>
              <ToolSet>
                <Tool $on aria-label="По левому краю"><AlignIcon kind="l" /></Tool>
                <Tool $w={23} aria-label="По центру"><AlignIcon kind="c" /></Tool>
                <Tool $line $w={23} aria-label="По правому краю"><AlignIcon kind="r" /></Tool>
                <Tool $line $w={23} aria-label="По ширине"><AlignIcon kind="j" /></Tool>
              </ToolSet>
              <ToolSet><Tool $w={30} aria-label="Интервал"><SpacingIcon /><Down /></Tool></ToolSet>
              <ToolSet>
                <Tool $w={33} aria-label="Заливка"><BucketIcon /><Down /></Tool>
                <Tool $line $w={33} $gap={6} aria-label="Границы"><BorderIcon /><Down /></Tool>
              </ToolSet>
            </ToolRow>
          </ToolRows>
        </Group>

        <Group name="Стили">
          <Gallery>
            <Cards>
              {styleCards.map((s, i) => (
                <Card key={i} $c={s.c} $size={s.size} $b={s.b}><strong>{s.sample}</strong><span>{s.name}</span></Card>
              ))}
            </Cards>
            <GalleryNav>
              <button aria-label="Вверх"><Ico w={5} h={3}><path d="M0 3h5L2.500 0z" fill="#a3abb5" /></Ico></button>
              <button aria-label="Вниз"><Down /></button>
              <button aria-label="Ещё"><Ico w={7} h={7} crisp><path d="M0 0h7v1H0zM1 3h5v1H5v1H4v1H3V5H2V4H1z" fill="#4c76b8" /></Ico></button>
            </GalleryNav>
          </Gallery>
          <BigButton $w={63}><ChangeStylesIcon /><span>Изменить</span><Inline>стили <Down /></Inline></BigButton>
        </Group>

        <Group name="Редактирование" launcher={false}>
          <Stack>
            <SmallButton $gap={6}><FindIcon />Найти<Down /></SmallButton>
            <SmallButton><ReplaceIcon />Заменить</SmallButton>
            <SmallButton $gap={3}><CursorIcon />Выделить<Down /></SmallButton>
          </Stack>
        </Group>
      </Ribbon>

      <Work>
        <TabStop aria-label="Позиция табуляции"><Ico w={15} h={15}><path d="M.5.5h14v14H.5z" fill="#e3ecf9" stroke="#3f6fca" /><path d="M6.500 5v5H11" stroke="#1e3050" strokeWidth="2" /></Ico></TabStop>
        <RulerRow>
          <RulerWrap>
            <HRuler>
              {hMarks.map((k) => (
                <Mark key={k}>
                  {k % 4 === 0 ? (k === 12 || k === 84 ? null : Math.abs(k / 4 - 3)) : <Dot $long={k % 4 === 2} />}
                </Mark>
              ))}
            </HRuler>
            <Stops>{Array.from({ length: 12 }, (_, k) => <i key={k} />)}</Stops>
            <Marker $x={170} $y={-4}><Ico w={11} h={9}><path d="M1.500.5h8v3l-4 4-4-4z" fill="#dfe7f3" stroke="#5f7291" /></Ico></Marker>
            <Marker $x={194} $y={4}><Ico w={11} h={15}><path d="M1.500 8.500v-3l4-4 4 4v3zM1.500 8.500h8v5h-8z" fill="#dfe7f3" stroke="#4f6690" /></Ico></Marker>
            <Marker $x={732} $y={4}><Ico w={11} h={9}><path d="M1.500 8.500v-3l4-4 4 4v3z" fill="#dfe7f3" stroke="#5f7291" /></Ico></Marker>
          </RulerWrap>
        </RulerRow>
        <VSide>
          <VRuler>
            {vMarks.map((k) => (
              <VMark key={k}>{k % 4 === 0 ? (k === 8 ? null : <b>{Math.abs(k / 4 - 2)}</b>) : <Dot $v $long={k % 4 === 2} />}</VMark>
            ))}
          </VRuler>
        </VSide>
        <Canvas>
          <Swoosh>
            <svg width="330" height="120" viewBox="0 0 330 120" aria-hidden="true">
              <path d="M0 0h310C180 30 80 66 0 94z" fill="#c2d9f2" opacity=".55" />
              <path d="M310 0C180 30 80 66 0 94v22C70 74 160 36 330 0z" fill="#b5cfee" opacity=".35" />
              <path d="M0 116C70 74 140 46 240 19" stroke="#b7cfee" fill="none" opacity=".7" />
            </svg>
          </Swoosh>
          <Paper>
            <DocList>
              <li><Num>1.</Num><Sentence /></li>
              <li><Num>2.</Num><Picked><Sentence /></Picked></li>
            </DocList>
            <p><Sentence /></p>

            <MiniBar>
              <MiniRow>
                <Combo w={74} label="Шрифт" value="Times New" />
                <Combo w={40} label="Размер" value="12" />
                <Tool aria-label="Увеличить размер"><SizeAIcon up /></Tool>
                <Tool aria-label="Уменьшить размер"><SizeAIcon /></Tool>
                <Tool $w={30} aria-label="Стили"><StyleAIcon /><Down /></Tool>
                <Tool $w={25} aria-label="Формат по образцу"><BrushIcon /></Tool>
              </MiniRow>
              <MiniRow>
                <Tool $w={22}><Glyph>Ж</Glyph></Tool>
                <Tool><Glyph $i>К</Glyph></Tool>
                <Tool aria-label="По центру"><AlignIcon kind="c" /></Tool>
                <Tool $w={34} aria-label="Цвет выделения"><HighlightIcon /><Down /></Tool>
                <Tool $w={35} $gap={8} aria-label="Цвет текста"><FontColorIcon /><Down /></Tool>
                <Tool aria-label="Уменьшить отступ"><IndentIcon /></Tool>
                <Tool aria-label="Увеличить отступ"><IndentIcon right /></Tool>
                <Tool $w={32} $gap={6} aria-label="Маркеры"><BulletsIcon /><Down /></Tool>
              </MiniRow>
            </MiniBar>

            <Menu role="menu">
              {menu.map((m, i) =>
                m ? (
                  <MenuRow key={i} role="menuitem" $hot={m.hot}>
                    <Slot $on={m.on}>{m.icon}</Slot>
                    <Mnemonic text={m.t} />
                    {m.sub && <SubMark $split={m.split}><Right /></SubMark>}
                  </MenuRow>
                ) : <Divider key={i} />
              )}
            </Menu>
          </Paper>
        </Canvas>
        <VScroll>
          <SplitBar />
          <RulerToggle aria-label="Линейка"><Ico w={14} h={14}><path d="M1.500 1.500h4v2h3v-1h4v5l-2 1v3h-3v-2h-3l-1-2h-2z" fill="#f3f6fb" stroke="#3d4a61" /><path d="M4 6l2-1M7 8l3-2" stroke="#3d4a61" strokeWidth=".8" /></Ico></RulerToggle>
          <ArrowButton aria-label="Вверх"><Ico w={9} h={5}><path d="M0 5h9L4.500 0z" fill="#3d5480" /></Ico></ArrowButton>
          <Track><Thumb><Ico w={8} h={8} crisp><path d="M0 .5h8M0 2.500h8M0 4.500h8M0 6.500h8" stroke="#737b87" /></Ico></Thumb></Track>
          <ArrowButton aria-label="Вниз"><Ico w={9} h={5}><path d="M0 0h9L4.500 5z" fill="#3d5480" /></Ico></ArrowButton>
          <NavButton aria-label="Предыдущая"><Ico w={5} h={7} crisp><path d="M0 2.500h5M0 5.500h5M1 1.500h3M1 4.500h3M2 .5h1M2 3.500h1" stroke="#111" /></Ico></NavButton>
          <NavButton aria-label="Выбор объекта"><Ico w={8} h={8}><circle cx="4" cy="4" r="3.200" fill="#d9dccf" stroke="#222" /></Ico></NavButton>
          <NavButton aria-label="Следующая"><Ico w={5} h={7} crisp><path d="M0 1.500h5M0 4.500h5M1 2.500h3M1 5.500h3M2 3.500h1M2 6.500h1" stroke="#111" /></Ico></NavButton>
        </VScroll>
      </Work>

      <StatusBar>
        <StatusItem>Страница: 1 из 1</StatusItem>
        <StatusItem>Число слов: 30/89</StatusItem>
        <StatusItem>
          <Ico w={17} h={16}><path d="M1 7l5-3 4 4 4-1 1 2-7 6-7-5z" fill="#fff" stroke="#5871a8" /><path d="M1 9v2l7 4 7-5V8" stroke="#5871a8" /><path d="M7 6l2.500 3L15 1" stroke="#2f62c8" strokeWidth="2" /></Ico>
          русский
        </StatusItem>
        <ZoomArea>
          <Views>
            <View $on aria-label="Разметка"><Ico w={12} h={13} crisp><path d="M1.500 1.500h9v10h-9z" fill="#fff" stroke="#5b4c38" /><path d="M3 4.500h6M3 6.500h6M3 8.500h6" stroke="#5b4c38" /></Ico></View>
            <View aria-label="Чтение"><Ico w={12} h={12}><path d="M.5 2l4-1L6 2.500 7.500 1l4 1v8l-4-.5L6 11 4.500 9.500l-4 .5z" fill="#fff" stroke="#46566f" /><path d="M6 2.500V11M2 4.500h2.500M2 6.500h2.500M8 4.500h2M8 6.500h2" stroke="#46566f" /></Ico></View>
            <View aria-label="Веб-документ"><Ico w={12} h={12}><path d="M.5.5h8v9h-8z" fill="#fff" stroke="#46566f" /><path d="M2 3h5M2 5h5" stroke="#46566f" /><circle cx="8.500" cy="8.500" r="3" fill="#3e9a52" stroke="#2c5fa8" /></Ico></View>
            <View aria-label="Структура"><Ico w={12} h={12} crisp><path d="M1 1.500h5M3 3.500h2M6 3.500h5M5 5.500h6M3 7.500h2M6 7.500h5M5 9.500h6" stroke="#6a7890" /></Ico></View>
            <View aria-label="Черновик"><Ico w={12} h={12} crisp><path d="M1 1.500h10M1 3.500h10M1 5.500h10M1 7.500h10M1 9.500h10" stroke="#46566f" /></Ico></View>
          </Views>
          <Percent>100%</Percent>
          <Round aria-label="Уменьшить"><Ico w={16} h={16}><circle cx="8" cy="8" r="7" fill="#e4edf9" stroke="#5f7290" /><path d="M4 8h8" stroke="#4f5b70" strokeWidth="2" /></Ico></Round>
          <Slider type="range" min={0} max={100} defaultValue={50} aria-label="Масштаб" />
          <Round aria-label="Увеличить"><Ico w={16} h={16}><circle cx="8" cy="8" r="7" fill="#e4edf9" stroke="#5f7290" /><path d="M4 8h8M8 4v8" stroke="#4f5b70" strokeWidth="2" /></Ico></Round>
        </ZoomArea>
      </StatusBar>

      <TaskBar>
        <Start><Flag />пуск</Start>
        <Task><Ico><circle cx="8" cy="8" r="7.500" fill="#7fd3c0" /><path d="M8 1a7 7 0 0 1 7 7c-3 2-6 0-7-7z" fill="#3a7ee0" /><path d="M3 5h6M6 5v6" stroke="#fff" strokeWidth="2" /><path d="M13 8c-4-2-5 4-1 4l2-1" stroke="#1f6f66" strokeWidth="1.600" /></Ico>Total Commander 6.5...</Task>
        <Task><WordDoc />информатика и осно...</Task>
        <Task $on><WordDoc />TestDoc - Microsoft ...</Task>
        <Lang>RU</Lang>
        <Tray>
          <Chevron aria-label="Показать значки"><Ico w={17} h={18}><circle cx="8.500" cy="9" r="8" fill="#2a8ff0" stroke="#8fd0fb" strokeWidth=".8" /><path d="M10.500 5l-4 4 4 4" stroke="#fff" strokeWidth="2" /></Ico></Chevron>
          <Ico w={15} h={16}><rect width="14" height="14" fill="#f4f4f4" /><path d="M1 1h4v5l5-5h4L7 8l3 5H7L5 10l-1 3H1z" fill="#e0201c" /><path d="M8 9l5 5M13.500 9.500v5h-5" stroke="#111" strokeWidth="2" /></Ico>
          <DayBox>21</DayBox>
          <time>21:14</time>
        </Tray>
      </TaskBar>
    </Screen>
  );
}
